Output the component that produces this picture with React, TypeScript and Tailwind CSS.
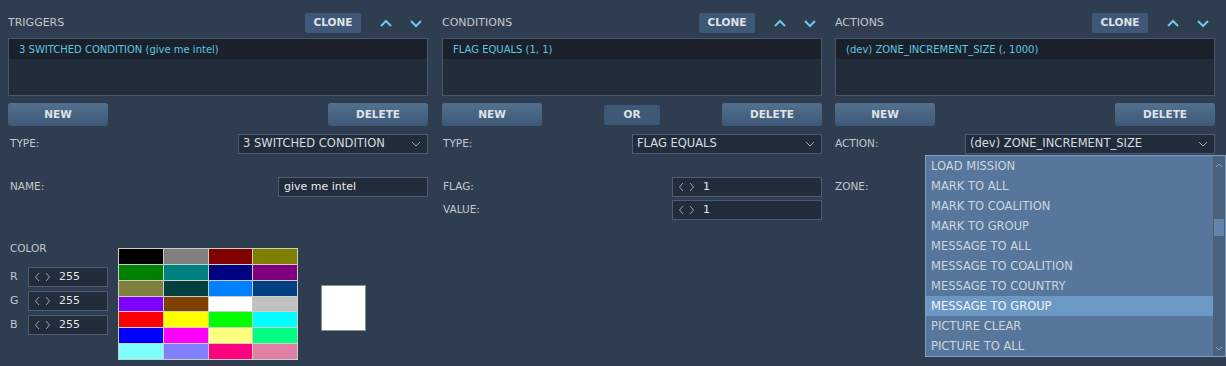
import React from 'react';

const FONT = "font-['DejaVu_Sans',sans-serif]";

const Chevron = ({ up }: { up?: boolean }) => (
    <svg width="14" height="10" viewBox="0 0 14 10" className="block">
        <path d={up ? 'M2 8 L7 3 L12 8' : 'M2 3 L7 8 L12 3'} fill="none" stroke="#6ec8e8" strokeWidth="2" />
    </svg>
);

const SmallChevron = () => (
    <svg width="10" height="6" viewBox="0 0 10 6" className="block">
        <path d="M1 1 L5 5 L9 1" fill="none" stroke="#9aa6b4" strokeWidth="1" />
    </svg>
);

const Btn = ({ label, w }: { label: string; w: string }) => (
    <div className={`${w} h-[23px] rounded-[3px] bg-gradient-to-b from-[#52708f] to-[#3f5877] flex items-center justify-center text-[10.5px] font-bold text-[#dfe3e8]`}>
        {label}
    </div>
);

const Header = ({ title }: { title: string }) => (
    <div className="flex items-center h-[20px]">
        <span className="text-[11px] text-[#c3c8ce] flex-1">{title}</span>
        <div className="w-[56px] h-[20px] rounded-[2px] bg-[#3f5877] flex items-center justify-center text-[10.5px] font-bold text-[#dfe3e8]">CLONE</div>
        <div className="ml-[18px]"><Chevron up /></div>
        <div className="ml-[16px] mr-[5px]"><Chevron /></div>
    </div>
);

const ListBox = ({ item }: { item: string }) => (
    <div className="mt-[5px] h-[58px] border border-[#46576c] bg-[#222d3c]">
        <div className="h-[20px] bg-[#1a212b] flex items-center pl-[10px] text-[10px] text-[#5cc6e6]">{item}</div>
    </div>
);

const Select = ({ value, w }: { value: string; w: string }) => (
    <div className={`${w} h-[20px] border border-[#4a5d75] bg-[#222d3c] flex items-center pl-[4px] pr-[6px] text-[11.5px] text-[#d6dbe0]`}>
        <span className="flex-1 whitespace-nowrap">{value}</span>
        <SmallChevron />
    </div>
);

const Spin = () => (
    <svg width="17" height="10" viewBox="0 0 17 10" className="block">
        <path d="M5 1 L1.5 5 L5 9" fill="none" stroke="#98a4b2" strokeWidth="1" />
        <path d="M12 1 L15.5 5 L12 9" fill="none" stroke="#98a4b2" strokeWidth="1" />
    </svg>
);

const NumInput = ({ value, w }: { value: string; w: string }) => (
    <div className={`${w} h-[20px] border border-[#4a5d75] bg-[#222d3c] flex items-center pl-[5px] text-[11px] text-[#e2e6ea]`}>
        <Spin />
        <span className="ml-[8px]">{value}</span>
    </div>
);

const Label = ({ text }: { text: string }) => <span className="text-[10.5px] text-[#c3c8ce] flex-1">{text}</span>;

const swatches = [
    '#000000', '#808080', '#800000', '#808000',
    '#008000', '#008080', '#000080', '#800080',
    '#808040', '#004040', '#0080ff', '#004080',
    '#8000ff', '#804000', '#ffffff', '#c0c0c0',
    '#ff0000', '#ffff00', '#00ff00', '#00ffff',
    '#0000ff', '#ff00ff', '#ffff80', '#00ff80',
    '#80ffff', '#8080ff', '#ff0080', '#df80a4',
];

const options = [
    'LOAD MISSION', 'MARK TO ALL', 'MARK TO COALITION', 'MARK TO GROUP', 'MESSAGE TO ALL',
    'MESSAGE TO COALITION', 'MESSAGE TO COUNTRY', 'MESSAGE TO GROUP', 'PICTURE CLEAR', 'PICTURE TO ALL',
];

export default function App() {
    return (
        <div className={`${FONT} w-[1226px] h-[366px] bg-[#2e3d50] flex pl-[8px] pt-[13px] overflow-hidden`}>
            {/* triggers */}
            <div className="w-[420px] flex flex-col">
                <Header title="TRIGGERS" />
                <ListBox item="3 SWITCHED CONDITION (give me intel)" />
                <div className="mt-[7px] flex justify-between">
                    <Btn label="NEW" w="w-[100px]" />
                    <Btn label="DELETE" w="w-[100px]" />
                </div>
                <div className="mt-[8px] flex items-center pl-[2px]">
                    <Label text="TYPE:" />
                    <Select value="3 SWITCHED CONDITION" w="w-[190px]" />
                </div>
                <div className="mt-[23px] flex items-center pl-[2px]">
                    <Label text="NAME:" />
                    <div className="w-[150px] h-[20px] border border-[#4a5d75] bg-[#222d3c] flex items-center pl-[5px] text-[11px] text-[#e8ebee]">give me intel</div>
                </div>
                <div className="mt-[44px] flex">
                    <div className="w-[110px] pl-[2px]">
                        <div className="text-[10.5px] text-[#c3c8ce] h-[14px] leading-[14px]">COLOR</div>
                        <div className="mt-[12px] flex flex-col gap-[4px]">
                            {['R', 'G', 'B'].map((c) => (
                                <div key={c} className="flex items-center">
                                    <span className="w-[18px] text-[11px] text-[#c3c8ce]">{c}</span>
                                    <NumInput value="255" w="w-[80px]" />
                                </div>
                            ))}
                        </div>
                    </div>
                    <div className="mt-[7px] grid grid-cols-4 w-[180px] h-[112px] bg-[#c8d0c4] border border-[#c8d0c4] gap-[1px]">
                        {swatches.map((s, i) => (
                            <div key={i} style={{ backgroundColor: s }} />
                        ))}
                    </div>
                    <div className="ml-[23px] mt-[44px] w-[45px] h-[46px] bg-white border border-[#8a8f94]" />
                </div>
            </div>

            {/* conditions */}
            <div className="w-[380px] ml-[14px] flex flex-col">
                <Header title="CONDITIONS" />
                <ListBox item="FLAG EQUALS (1, 1)" />
                <div className="mt-[7px] flex justify-between items-center">
                    <Btn label="NEW" w="w-[100px]" />
                    <div className="w-[56px] h-[20px] rounded-[2px] bg-[#3f5877] flex items-center justify-center text-[10.5px] font-bold text-[#dfe3e8]">OR</div>
                    <Btn label="DELETE" w="w-[100px]" />
                </div>
                <div className="mt-[8px] flex items-center pl-[1px]">
                    <Label text="TYPE:" />
                    <Select value="FLAG EQUALS" w="w-[190px]" />
                </div>
                <div className="mt-[23px] flex items-center pl-[1px]">
                    <Label text="FLAG:" />
                    <NumInput value="1" w="w-[150px]" />
                </div>
                <div className="mt-[3px] flex items-center pl-[1px]">
                    <Label text="VALUE:" />
                    <NumInput value="1" w="w-[150px]" />
                </div>
            </div>

            {/* actions */}
            <div className="w-[380px] ml-[13px] flex flex-col relative">
                <Header title="ACTIONS" />
                <ListBox item="(dev) ZONE_INCREMENT_SIZE (, 1000)" />
                <div className="mt-[7px] flex justify-between">
                    <Btn label="NEW" w="w-[100px]" />
                    <Btn label="DELETE" w="w-[100px]" />
                </div>
                <div className="mt-[8px] flex items-center">
                    <Label text="ACTION:" />
                    <Select value="(dev) ZONE_INCREMENT_SIZE" w="w-[250px]" />
                </div>
                <div className="mt-[23px] flex items-center h-[20px]">
                    <Label text="ZONE:" />
                </div>

                <div className="absolute left-[90px] top-[142px] w-[301px] h-[202px] bg-[#56779b] border border-[#7d9ec4] flex">
                    <div className="flex-1 flex flex-col">
                        {options.map((o) => (
                            <div
                                key={o}
                                className={`h-[20px] flex items-center pl-[5px] pt-[2px] text-[11.5px] whitespace-nowrap ${
                                    o === 'MESSAGE TO GROUP' ? 'bg-[#6c98c6] text-[#f2f5f8]' : 'text-[#cdd5de]'
                                }`}
                            >
                                {o}
                            </div>
                        ))}
                    </div>
                    <div className="w-[12px] bg-[#4b607b] flex flex-col items-center">
                        <svg width="8" height="6" viewBox="0 0 8 6" className="mt-[6px]">
                            <path d="M1 5 L4 2 L7 5" fill="none" stroke="#8a9ab0" strokeWidth="1" />
                        </svg>
                        <div className="mt-[51px] w-[10px] h-[17px] bg-[#6485ab]" />
                        <div className="flex-1" />
                        <svg width="8" height="6" viewBox="0 0 8 6" className="mb-[4px]">
                            <path d="M1 1 L4 4 L7 1" fill="none" stroke="#8a9ab0" strokeWidth="1" />
                        </svg>
                    </div>
                </div>
            </div>
        </div>
    );
}
